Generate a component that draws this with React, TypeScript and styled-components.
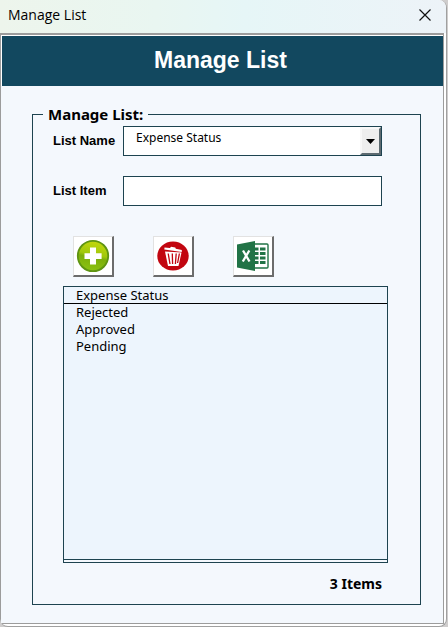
import React, { useState } from "react";
import styled, { createGlobalStyle } from "styled-components";

const teal = "#12485f";
const line = "#1d4350";
const tahoma = `Tahoma, "Noto Sans", "Open Sans", sans-serif`;
const arial = `"Liberation Sans", Arial, sans-serif`;

const GlobalStyle = createGlobalStyle`
  * { box-sizing: border-box; }
  body { margin: 0; background: #cfcdcd; }
`;

const Window = styled.div`
  display: flex;
  flex-direction: column;
  min-height: 100vh;
  padding-right: 1px;
  color: #000;
  font-family: ${tahoma};
`;

const Frame = styled.div`
  flex: 1;
  display: flex;
  flex-direction: column;
  background: #fff;
  border: solid #a0a0a0;
  border-width: 0 1px 1px 0;
  border-radius: 0 8px 8px 8px;
  overflow: hidden;
  padding: 0 2px 2px 0;
`;

const TitleBar = styled.header`
  display: flex;
  align-items: center;
  justify-content: space-between;
  height: 33px;
  margin-right: -2px;
  padding: 0 14px 4px 8px;
  background: linear-gradient(90deg, #edf5ec 0%, #e9f6f1 35%, #e6f6f7 55%, #edf3f8 100%);
`;

const Title = styled.span`
  font: 14px/20px "Open Sans", "Noto Sans", sans-serif;
`;

const CloseButton = styled.button`
  display: flex;
  padding: 0;
  border: 0;
  background: none;
`;

const Form = styled.main`
  flex: 1;
  display: flex;
  flex-direction: column;
  background: #f4f8fd;
  border: 1px solid #9c9c9c;
  border-top-width: 2px;
`;

const Banner = styled.h1`
  margin: 0;
  height: 51px;
  padding-right: 4px;
  border: solid #fff;
  border-width: 1px 0 0 1px;
  background: ${teal};
  color: #fff;
  font: bold 23px/48px ${arial};
  text-align: center;
`;

const Body = styled.div`
  flex: 1;
  display: flex;
  padding: 20px 22px 18px 31px;
`;

const Group = styled.fieldset`
  flex: 1;
  min-width: 0;
  display: flex;
  flex-direction: column;
  margin: 0;
  padding: 3px 0 12px;
  border: 1px solid ${line};
`;

const Legend = styled.legend`
  margin-left: 10px;
  padding: 0 5px;
  font-size: 15px;
  line-height: 17px;
  font-weight: bold;
`;

const Field = styled.div`
  display: grid;
  grid-template-columns: 70px 1fr;
  align-items: center;
  margin: 0 38px 20px 20px;
`;

const Label = styled.label`
  font: bold 13px/16px ${arial};
`;

const Picker = styled.div`
  display: flex;
  position: relative;
`;

const Select = styled.select`
  appearance: none;
  flex: 1;
  min-width: 0;
  height: 30px;
  padding: 0 24px 6px 12px;
  border: 1px solid ${line};
  border-radius: 0;
  background: #fff;
  color: #000;
  font: 12px/18px ${tahoma};
`;

const Arrow = styled.span`
  position: absolute;
  top: 1px;
  right: 1px;
  bottom: 1px;
  width: 21px;
  display: flex;
  align-items: center;
  justify-content: center;
  border: 2px solid;
  border-color: #f8f8f8 #5d6a70 #5d6a70 #f8f8f8;
  background: #eeeeee;
  pointer-events: none;
`;

const TextInput = styled.input`
  width: 100%;
  height: 30px;
  padding: 0 12px;
  border: 1px solid ${line};
  background: #fff;
  font: 12px/18px ${tahoma};
`;

const Actions = styled.div`
  display: flex;
  gap: 39px;
  margin: 10px 0 9px 40px;
`;

const ActionButton = styled.button`
  display: flex;
  align-items: center;
  justify-content: center;
  width: 41px;
  height: 41px;
  padding: 0;
  border: solid;
  border-width: 1px 2px 2px 1px;
  border-color: #e2e2e2 #6c6c6c #6c6c6c #e2e2e2;
  background: #fff;
`;

const ListBox = styled.div`
  flex: 1;
  margin: 0 32px 0 30px;
  padding-bottom: 2px;
  display: flex;
  border: 1px solid ${line};
`;

const ListArea = styled.div`
  flex: 1;
  background: #edf5fd;
  border-bottom: 1px solid ${line};
`;

const Table = styled.table`
  width: 100%;
  border-collapse: separate;
  border-spacing: 0;
  font-size: 13px;
  line-height: 17px;
`;

const HeadCell = styled.th`
  height: 17px;
  padding: 0 12px;
  border-bottom: 1px solid #000;
  font-weight: normal;
  text-align: left;
  line-height: 16px;
`;

const Cell = styled.td`
  height: 17px;
  padding: 0 12px;
`;

const Count = styled.output`
  align-self: flex-end;
  margin: 12px 38px 0 0;
  font-size: 14px;
  line-height: 17px;
  font-weight: bold;
`;

const AddIcon = () => (
  <svg width="34" height="34" viewBox="0 0 34 34" aria-hidden="true">
    <defs>
      <linearGradient id="lime" x1="0.6" y1="0" x2="0.4" y2="1">
        <stop offset="0" stopColor="#c4d80c" />
        <stop offset="0.45" stopColor="#a0c80c" />
        <stop offset="0.55" stopColor="#7cae0a" />
        <stop offset="1" stopColor="#8cc414" />
      </linearGradient>
    </defs>
    <circle cx="17" cy="17" r="15.2" fill="url(#lime)" stroke="#5f9412" strokeWidth="1.8" />
    <path d="M14 8.5h6v5.700h5.600v5.800H20v5.600h-6V20H8.500v-5.800H14z" fill="#fff" />
  </svg>
);

const DeleteIcon = () => (
  <svg width="34" height="34" viewBox="0 0 34 34" aria-hidden="true">
    <ellipse cx="17" cy="17" rx="15.7" ry="14.5" fill="#c20610" />
    <path d="M9 12.5 25.500 13.500 22.500 27H12z" fill="#fff" />
    <path d="M8.500 8.500 14 9l1-1.200 4.300.7.500 1.300 6 1.200v2L8.300 10.500z" fill="#fff" />
    <path d="m12.200 14.500 1.800 10.500M16.300 14.500l.3 10.500M20.200 14.500l-.8 10.500M23.400 14.500 21.600 24" stroke="#c20610" strokeWidth="1.3" fill="none" />
  </svg>
);

const ExcelIcon = () => (
  <svg width="34" height="34" viewBox="0 0 34 34" aria-hidden="true">
    <path d="M18 5h13q1 0 1 1v22q0 1-1 1H18z" fill="#fff" stroke="#217346" strokeWidth="1.4" />
    <path
      d="M18 8.500h4.500v3H18zM24 8.500h5.500v3H24zM18 13h4.500v3H18zM24 13h5.500v3H24zM18 17.500h4.500v3H18zM24 17.500h5.500v3H24zM18 22h4.500v3H18zM24 22h5.500v3H24z"
      fill="#217346"
    />
    <path d="M1 5.500 19 2v30L1 28.500z" fill="#217346" />
    <path d="m7 11.500 6.500 11M13.300 11.500l-6.500 11" stroke="#fff" strokeWidth="2.3" fill="none" />
  </svg>
);

const listName = "Expense Status";
const items = ["Rejected", "Approved", "Pending"];

export default function App() {
  const [item, setItem] = useState("");

  return (
    <Window>
      <GlobalStyle />
      <Frame>
        <TitleBar>
          <Title>Manage List</Title>
          <CloseButton type="button" aria-label="Close">
            <svg width="14" height="14" viewBox="0 0 14 14" aria-hidden="true">
              <path d="m1.500 1.500 11 11M12.500 1.500l-11 11" stroke="#111" strokeWidth="1.2" />
            </svg>
          </CloseButton>
        </TitleBar>
        <Form>
          <Banner>Manage List</Banner>
          <Body>
            <Group>
              <Legend>Manage List:</Legend>
              <Field>
                <Label htmlFor="list-name">List Name</Label>
                <Picker>
                  <Select id="list-name" defaultValue={listName}>
                    <option>{listName}</option>
                  </Select>
                  <Arrow>
                    <svg width="9" height="5" viewBox="0 0 9 5" aria-hidden="true">
                      <path d="M0 0h9L4.500 5z" />
                    </svg>
                  </Arrow>
                </Picker>
              </Field>
              <Field>
                <Label htmlFor="list-item">List Item</Label>
                <TextInput id="list-item" value={item} onChange={(e) => setItem(e.target.value)} />
              </Field>
              <Actions>
                <ActionButton type="button" aria-label="Add item">
                  <AddIcon />
                </ActionButton>
                <ActionButton type="button" aria-label="Delete item">
                  <DeleteIcon />
                </ActionButton>
                <ActionButton type="button" aria-label="Export to Excel">
                  <ExcelIcon />
                </ActionButton>
              </Actions>
              <ListBox>
                <ListArea>
                  <Table>
                    <thead>
                      <tr>
                        <HeadCell scope="col">{listName}</HeadCell>
                      </tr>
                    </thead>
                    <tbody>
                      {items.map((name) => (
                        <tr key={name}>
                          <Cell>{name}</Cell>
                        </tr>
                      ))}
                    </tbody>
                  </Table>
                </ListArea>
              </ListBox>
              <Count>{items.length} Items</Count>
            </Group>
          </Body>
        </Form>
      </Frame>
    </Window>
  );
}
